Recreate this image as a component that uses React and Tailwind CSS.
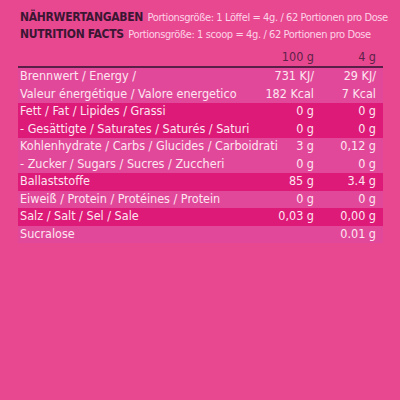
import React from 'react';

const rows = [
  { label: 'Brennwert / Energy /', a: '731 KJ/', b: '29 KJ/', dark: false },
  { label: 'Valeur énergétique / Valore energetico', a: '182 Kcal', b: '7 Kcal', dark: false },
  { label: 'Fett / Fat / Lipides / Grassi', a: '0 g', b: '0 g', dark: true },
  { label: '- Gesättigte / Saturates / Saturés / Saturi', a: '0 g', b: '0 g', dark: true },
  { label: 'Kohlenhydrate / Carbs / Glucides / Carboidrati', a: '3 g', b: '0,12 g', dark: false },
  { label: '- Zucker / Sugars / Sucres / Zuccheri', a: '0 g', b: '0 g', dark: false },
  { label: 'Ballaststoffe', a: '85 g', b: '3.4 g', dark: true },
  { label: 'Eiweiß / Protein / Protéines / Protein', a: '0 g', b: '0 g', dark: false },
  { label: 'Salz / Salt / Sel / Sale', a: '0,03 g', b: '0,00 g', dark: true },
  { label: 'Sucralose', a: '', b: '0.01 g', dark: false },
];

const font = { fontFamily: '"Liberation Sans Narrow", "DejaVu Sans Condensed", "Liberation Sans", sans-serif' };

export default function App() {
  return (
    <div className="w-[400px] h-[400px] bg-[#e8488f] pt-[8px] pl-[18px] pr-[17px]" style={font}>
      <div className="pl-[2px] leading-[15px] whitespace-nowrap">
        <div>
          <span className="font-bold text-[12px] tracking-[-0.3px] text-[#3a1633]">NÄHRWERTANGABEN</span>{' '}
          <span className="text-[11px] tracking-[-0.4px] text-[#fcd3e8]">Portionsgröße: 1 Löffel = 4g. / 62 Portionen pro Dose</span>
        </div>
        <div>
          <span className="font-bold text-[12px] tracking-[-0.3px] text-[#3a1633]">NUTRITION FACTS</span>{' '}
          <span className="text-[11px] tracking-[-0.4px] text-[#fcd3e8]">Portionsgröße: 1 scoop = 4g. / 62 Portionen pro Dose</span>
        </div>
      </div>

      <div className="mt-[7px] flex h-[17px] items-center pr-[7px] text-[12.5px] text-[#5c2249]">
        <div className="flex-1" />
        <div className="w-[60px] shrink-0 text-right">100 g</div>
        <div className="w-[62px] shrink-0 text-right">4 g</div>
      </div>
      <div className="h-[2px] bg-[#5a1f46]" />

      <div className="text-[12.5px] text-[#fde6f1]">
        {rows.map((r, i) => (
          <div
            key={i}
            className={`flex h-[17.5px] items-center pl-[2px] pr-[7px] ${r.dark ? 'bg-[#dd1a78]' : 'bg-[#e2489a]'}`}
          >
            <div className="flex-1 min-w-0 whitespace-nowrap">{r.label}</div>
            <div className="w-[60px] shrink-0 text-right whitespace-nowrap">{r.a}</div>
            <div className="w-[62px] shrink-0 text-right whitespace-nowrap">{r.b}</div>
          </div>
        ))}
      </div>
    </div>
  );
}
